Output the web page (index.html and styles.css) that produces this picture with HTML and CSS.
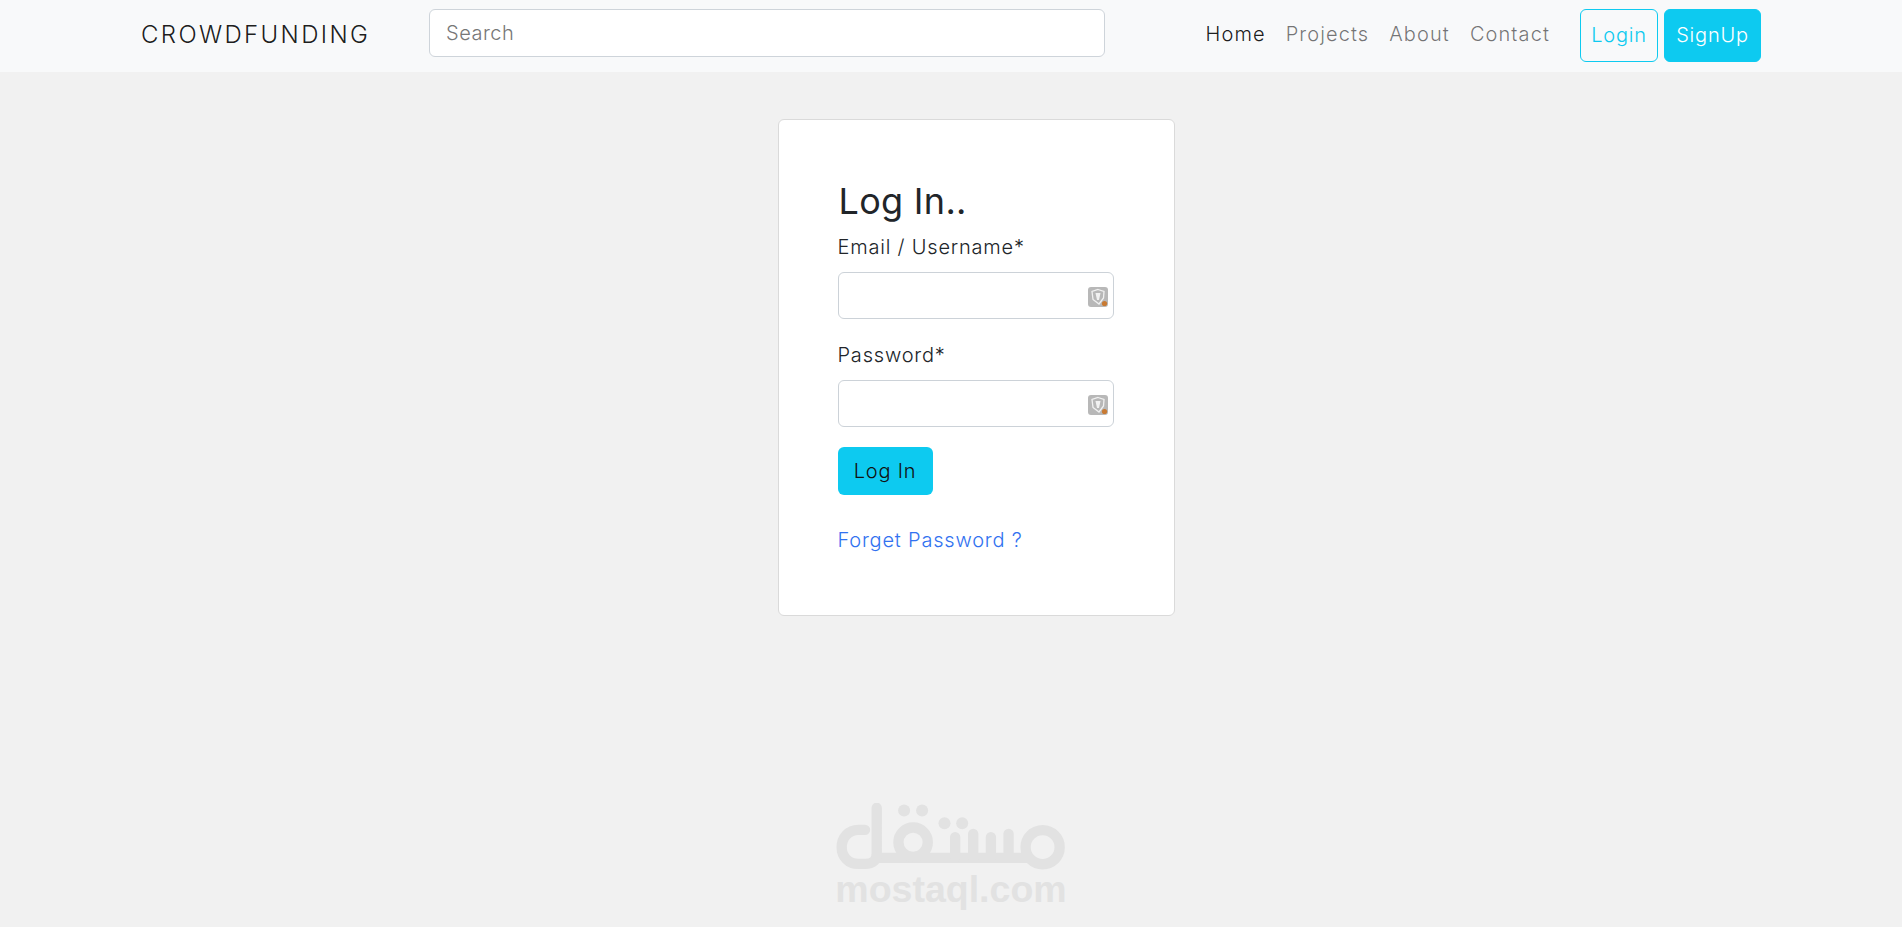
FILE: index.html
```html
<!DOCTYPE html>
<html lang="en">
<head>
<meta charset="utf-8">
<title>Crowdfunding - Log In</title>
<link rel="stylesheet" href="styles.css">
</head>
<body>
<nav class="navbar">
  <a class="brand" href="#">CROWDFUNDING</a>
  <input class="search" type="search" placeholder="Search">
  <ul class="links">
    <li><a class="link active" href="#">Home</a></li>
    <li><a class="link" href="#">Projects</a></li>
    <li><a class="link" href="#">About</a></li>
    <li><a class="link" href="#">Contact</a></li>
  </ul>
  <div class="actions">
    <a class="btn btn-outline" href="#">Login</a>
    <a class="btn btn-solid" href="#">SignUp</a>
  </div>
</nav>
<main class="main">
  <form class="card">
    <h1 class="title">Log In..</h1>
    <label class="label" for="email">Email / Username*</label>
    <div class="field">
      <input class="control" id="email" type="text">
      <svg class="key-icon" viewBox="0 0 20 20" aria-hidden="true">
        <rect width="20" height="20" rx="3" fill="#b8b8b8"/>
        <path d="M10 2.500 16 4.500 15.500 11 11 17 5 12.500 4 4.500Z" fill="none" stroke="#f1f1f1" stroke-width="1.300"/>
        <path d="M7.500 6h5L11 13H9Z" fill="#f1f1f1"/>
        <circle cx="16.500" cy="16.500" r="2.600" fill="#c87a33"/>
      </svg>
    </div>
    <label class="label label-second" for="password">Password*</label>
    <div class="field">
      <input class="control" id="password" type="password">
      <svg class="key-icon" viewBox="0 0 20 20" aria-hidden="true">
        <rect width="20" height="20" rx="3" fill="#b8b8b8"/>
        <path d="M10 2.500 16 4.500 15.500 11 11 17 5 12.500 4 4.500Z" fill="none" stroke="#f1f1f1" stroke-width="1.300"/>
        <path d="M7.500 6h5L11 13H9Z" fill="#f1f1f1"/>
        <circle cx="16.500" cy="16.500" r="2.600" fill="#c87a33"/>
      </svg>
    </div>
    <button class="submit" type="button">Log In</button>
    <a class="forgot" href="#">Forget Password ?</a>
  </form>
</main>
<div class="watermark">
  <svg class="wm-logo" viewBox="45 40 695 200" role="img" aria-label="مستقل">
    <g fill="none" stroke="#e2e2e2" stroke-width="31" stroke-linecap="round" stroke-linejoin="round">
      <circle cx="667" cy="172" r="51"/>
      <path d="M620 204H170"/>
      <path d="M565 132V204M512 142V204M459 132V204M405 142V204"/>
      <circle cx="279" cy="157" r="44"/>
      <path d="M170 54V190Q170 222 135 222H115C85 222 65 200 65 172S85 120 115 120H135"/>
    </g>
    <g fill="#e2e2e2">
      <circle cx="252" cy="62" r="18"/>
      <circle cx="306" cy="62" r="18"/>
      <circle cx="373" cy="100" r="18"/>
      <circle cx="426" cy="100" r="18"/>
    </g>
  </svg>
  <span class="wm-text">mostaql.com</span>
</div>
</body>
</html>
```
FILE: styles.css
```css
* { box-sizing: border-box; }
html, body { margin: 0; height: 100%; }
body {
  background: #f1f1f1;
  font-family: "Inter", "Liberation Sans", sans-serif;
  font-weight: 300;
  font-size: 20px;
  color: #212529;
  overflow: hidden;
}
a { text-decoration: none; }

.navbar {
  display: flex;
  align-items: flex-start;
  height: 72px;
  padding: 9px 141px 0;
  background: #f8f9fa;
}
.brand {
  flex: none;
  width: 288px;
  padding-top: 10px;
  font-size: 24px;
  line-height: 32px;
  letter-spacing: 2.35px;
  color: rgba(0, 0, 0, .9);
}
.search {
  flex: none;
  width: 676px;
  height: 48px;
  padding: 0 16px;
  border: 1px solid #ced4da;
  border-radius: 6px;
  background: #fff;
  font: inherit;
  letter-spacing: 0.5px;
  outline: none;
}
.search::placeholder { color: #777; opacity: 1; }
.links {
  display: flex;
  gap: 20px;
  margin: 0 0 0 auto;
  padding: 10px 0 0;
  list-style: none;
}
.link {
  display: block;
  line-height: 30px;
  letter-spacing: 1.1px;
  color: rgba(0, 0, 0, .55);
}
.link.active { color: rgba(0, 0, 0, .9); }
.actions {
  display: flex;
  gap: 6px;
  margin-left: 30px;
}
.btn {
  display: block;
  height: 53px;
  border: 1px solid #0dcaf0;
  border-radius: 6px;
  line-height: 51px;
  text-align: center;
  letter-spacing: 0.8px;
}
.btn-outline { width: 78px; color: #0dcaf0; }
.btn-solid { width: 97px; background: #0dcaf0; color: #fff; }

.main {
  display: flex;
  justify-content: center;
  padding: 47px 0 0 50px;
}
.card {
  display: flex;
  flex-direction: column;
  align-items: flex-start;
  width: 397px;
  height: 497px;
  padding: 60px 59px 0;
  background: #fff;
  border: 1px solid #dadada;
  border-radius: 6px;
}
.title {
  margin: -1px 0 0 1px;
  font-size: 36px;
  line-height: 44px;
  font-weight: 400;
  letter-spacing: 0.3px;
}
.label {
  margin: 9px 0 10px 0;
  line-height: 30px;
  font-weight: 300;
  letter-spacing: 0.8px;
}
.label-second { margin-top: 21px; }
.field {
  position: relative;
  width: 276px;
  height: 47px;
}
.control {
  display: block;
  width: 100%;
  height: 100%;
  border: 1px solid #ccd2d8;
  border-radius: 6px;
  background: #fff;
  outline: none;
}
.key-icon {
  position: absolute;
  top: 15px;
  right: 6px;
  width: 20px;
  height: 20px;
}
.submit {
  width: 95px;
  height: 48px;
  margin-top: 20px;
  padding: 0;
  border: 0;
  border-radius: 6px;
  background: #0dcaf0;
  color: #111;
  font: inherit;
  letter-spacing: 0.8px;
}
.forgot {
  margin: 30px 0 0 0;
  line-height: 30px;
  color: #3272f0;
  letter-spacing: 0.8px;
}

.watermark {
  position: absolute;
  left: 834px;
  top: 803px;
  width: 234px;
  display: flex;
  flex-direction: column;
  align-items: center;
}
.wm-logo { display: block; width: 232px; height: 67px; }
.wm-text {
  margin-top: 1px;
  font-family: "Liberation Sans", sans-serif;
  font-weight: 700;
  font-size: 37.500px;
  line-height: 36px;
  color: #e2e2e2;
  white-space: nowrap;
}
```
